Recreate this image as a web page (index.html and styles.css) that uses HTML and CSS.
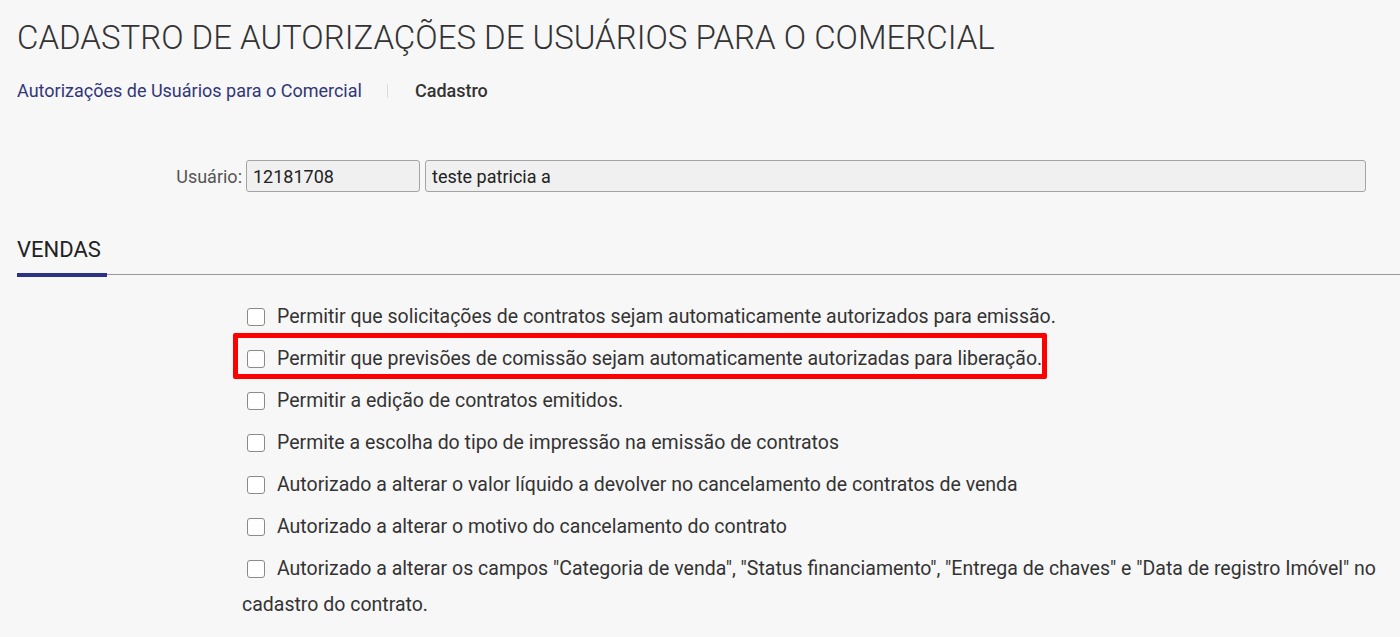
FILE: index.html
```html
<!DOCTYPE html>
<html lang="pt-BR">
<head>
<meta charset="utf-8">
<title>Cadastro de Autorizações</title>
<link rel="stylesheet" href="styles.css">
</head>
<body>
<div class="page">
  <h1 class="title">CADASTRO DE AUTORIZAÇÕES DE USUÁRIOS PARA O COMERCIAL</h1>
  <nav class="breadcrumb">
    <a class="crumb-link" href="#">Autorizações de Usuários para o Comercial</a>
    <span class="crumb-sep"></span>
    <span class="crumb-current">Cadastro</span>
  </nav>
  <div class="user-row">
    <label class="user-label">Usuário:</label>
    <input class="field field-code" type="text" value="12181708" readonly>
    <input class="field field-name" type="text" value="teste patricia a" readonly>
  </div>
  <div class="tabs">
    <div class="tab">VENDAS</div>
  </div>
  <div class="options">
    <div class="option"><input class="check" type="checkbox">Permitir que solicitações de contratos sejam automaticamente autorizados para emissão.</div>
    <div class="option"><span class="flag"><input class="check" type="checkbox">Permitir que previsões de comissão sejam automaticamente autorizadas para liberação.</span></div>
    <div class="option"><input class="check" type="checkbox">Permitir a edição de contratos emitidos.</div>
    <div class="option"><input class="check" type="checkbox">Permite a escolha do tipo de impressão na emissão de contratos</div>
    <div class="option"><input class="check" type="checkbox">Autorizado a alterar o valor líquido a devolver no cancelamento de contratos de venda</div>
    <div class="option"><input class="check" type="checkbox">Autorizado a alterar o motivo do cancelamento do contrato</div>
    <div class="option"><input class="check" type="checkbox">Autorizado a alterar os campos "Categoria de venda", "Status financiamento", "Entrega de chaves" e "Data de registro Imóvel" no cadastro do contrato.</div>
  </div>
</div>
</body>
</html>
```
FILE: styles.css
```css
html, body {
  margin: 0;
  padding: 0;
  background: #f7f7f7;
}
body {
  font-family: Roboto, "Liberation Sans", sans-serif;
  color: #333;
}
.page {
  padding: 0 0 0 17px;
}
.title {
  margin: 19px 0 0;
  font-size: 33px;
  line-height: 38px;
  font-weight: 300;
  color: #333;
  letter-spacing: 0;
}
.breadcrumb {
  margin-top: 24px;
  font-size: 18px;
  line-height: 20px;
  display: flex;
  align-items: center;
}
.crumb-link {
  color: #31367a;
  text-decoration: none;
}
.crumb-sep {
  width: 1px;
  height: 14px;
  background: #dcdcdc;
  margin: 0 27px 0 25px;
}
.crumb-current {
  font-weight: 500;
  color: #333;
}
.user-row {
  margin-top: 59px;
  display: flex;
  align-items: center;
}
.user-label {
  width: 225px;
  text-align: right;
  font-size: 18px;
  color: #555;
  margin-right: 4px;
}
.field {
  box-sizing: border-box;
  height: 32px;
  border: 1px solid #a3a3a3;
  border-radius: 3px;
  background: #f0f0f0;
  font-family: Roboto, "Liberation Sans", sans-serif;
  font-size: 18px;
  color: #222;
  padding: 0 6px;
  margin: 0;
  outline: none;
}
.field-code {
  width: 174px;
}
.field-name {
  width: 941px;
  margin-left: 5px;
}
.tabs {
  margin-top: 45px;
  display: flex;
  border-bottom: 1px solid #9a9a9a;
}
.tab {
  width: 90px;
  font-size: 22px;
  line-height: 26px;
  color: #222;
  padding-bottom: 10px;
  border-bottom: 4px solid #2b3283;
  margin-bottom: -3px;
}
.options {
  margin: 21px 0 0 225px;
  padding-right: 18px;
}
.option {
  padding: 3px 0;
  font-size: 19.5px;
  line-height: 36px;
  color: #333;
}
.check {
  appearance: none;
  -webkit-appearance: none;
  box-sizing: border-box;
  width: 18px;
  height: 18px;
  margin: 0 12px 0 5px;
  border: 1.5px solid #8a8a8a;
  border-radius: 3px;
  background: #fff;
  vertical-align: -3px;
}
.flag {
  position: relative;
  display: inline-block;
}
.flag::after {
  content: "";
  position: absolute;
  left: -9px;
  right: -5px;
  top: -8px;
  bottom: -2px;
  border: 5px solid #f00;
  border-radius: 2px;
  pointer-events: none;
}
```
